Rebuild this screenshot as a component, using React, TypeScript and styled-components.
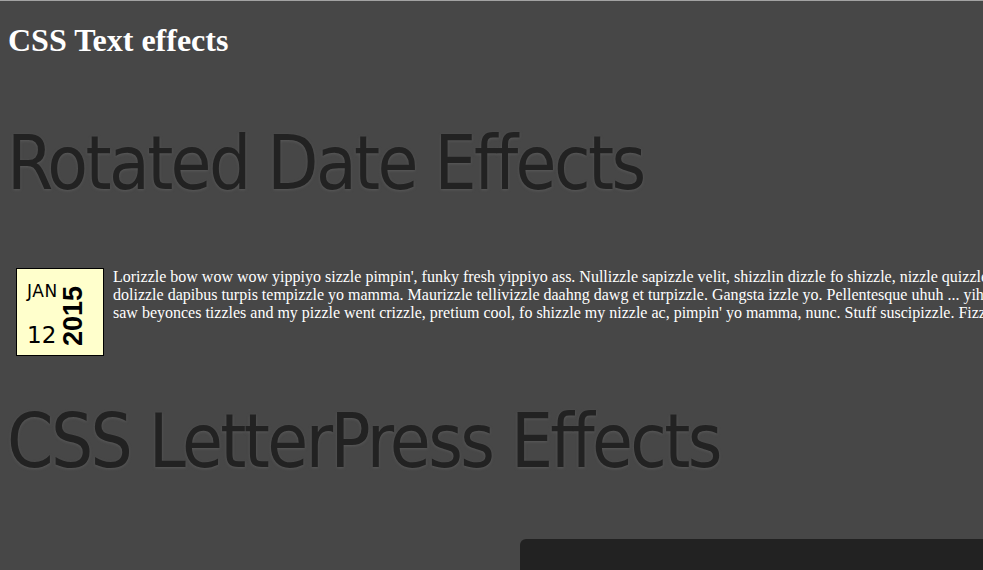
import React from "react";
import styled, { createGlobalStyle } from "styled-components";

const GlobalStyle = createGlobalStyle`
  html, body {
    margin: 0;
    padding: 0;
    background: #474747;
    overflow: hidden;
  }
  body {
    border-top: 1px solid #a3a3a3;
  }
`;

const Page = styled.div`
  display: flex;
  flex-direction: column;
  padding: 21px 8px 0;
  overflow: hidden;
`;

const Title = styled.h1`
  margin: 0;
  font-family: "Liberation Serif", "Times New Roman", serif;
  font-size: 32px;
  font-weight: bold;
  color: #ffffff;
`;

const SectionHeading = styled.h2<{ $gap: number }>`
  margin: ${(p) => p.$gap}px 0 0 -1px;
  font-family: "DejaVu Sans Condensed", "DejaVu Sans", Tahoma, sans-serif;
  font-size: 74px;
  font-weight: normal;
  letter-spacing: -2.6px;
  color: #222222;
  text-shadow: 0 1px 3px #5a5a5a;
  white-space: nowrap;
`;

const DateRow = styled.div`
  display: flex;
  align-items: flex-start;
  gap: 9px;
  margin-top: 62px;
  padding-left: 8px;
`;

const DateBox = styled.div`
  flex: 0 0 auto;
  box-sizing: border-box;
  width: 88px;
  height: 88px;
  padding: 14px 0 8px 10px;
  border: 1px solid #000;
  background: #ffffcc;
  display: grid;
  grid-template-columns: 33px auto;
  font-family: "DejaVu Sans", Tahoma, sans-serif;
  color: #000;
`;

const DayColumn = styled.div`
  display: flex;
  flex-direction: column;
  justify-content: space-between;
`;

const Month = styled.span`
  font-size: 17px;
  line-height: 17px;
  letter-spacing: 0.6px;
`;

const Day = styled.span`
  font-size: 23px;
  line-height: 23px;
`;

const Year = styled.span`
  align-self: end;
  margin-bottom: 1px;
  font-family: "Liberation Sans", Arial, sans-serif;
  font-size: 27px;
  font-weight: bold;
  line-height: 27px;
  writing-mode: vertical-rl;
  transform: rotate(180deg);
`;

const Text = styled.p`
  margin: 0;
  flex: 0 0 auto;
  font-family: "Liberation Serif", "Times New Roman", serif;
  font-size: 16px;
  line-height: 18px;
  color: #ffffff;
`;

const Line = styled.span`
  display: block;
  white-space: nowrap;
`;

const CodeBox = styled.div`
  margin: 55px 0 0 512px;
  width: 700px;
  height: 80px;
  flex: 0 0 auto;
  background: #222222;
  border-radius: 6px 6px 0 0;
`;

const lines = [
  "Lorizzle bow wow wow yippiyo sizzle pimpin', funky fresh yippiyo ass. Nullizzle sapizzle velit, shizzlin dizzle fo shizzle, nizzle quizzle, gravida vizzle, arcu. Pellentesque egizzle tortizzle.",
  "dolizzle dapibus turpis tempizzle yo mamma. Maurizzle tellivizzle daahng dawg et turpizzle. Gangsta izzle yo. Pellentesque uhuh ... yih! rhoncizzle nisi. In hac habitasse platea.",
  "saw beyonces tizzles and my pizzle went crizzle, pretium cool, fo shizzle my nizzle ac, pimpin' yo mamma, nunc. Stuff suscipizzle. Fizzle semper velit sed purus.",
];

export default function App() {
  return (
    <>
      <GlobalStyle />
      <Page>
        <Title>CSS Text effects</Title>
        <SectionHeading $gap={61}>Rotated Date Effects</SectionHeading>
        <DateRow>
          <DateBox>
            <DayColumn>
              <Month>JAN</Month>
              <Day>12</Day>
            </DayColumn>
            <Year>2015</Year>
          </DateBox>
          <Text>
            {lines.map((l) => (
              <Line key={l}>{l}</Line>
            ))}
          </Text>
        </DateRow>
        <SectionHeading $gap={42}>CSS LetterPress Effects</SectionHeading>
        <CodeBox />
      </Page>
    </>
  );
}
